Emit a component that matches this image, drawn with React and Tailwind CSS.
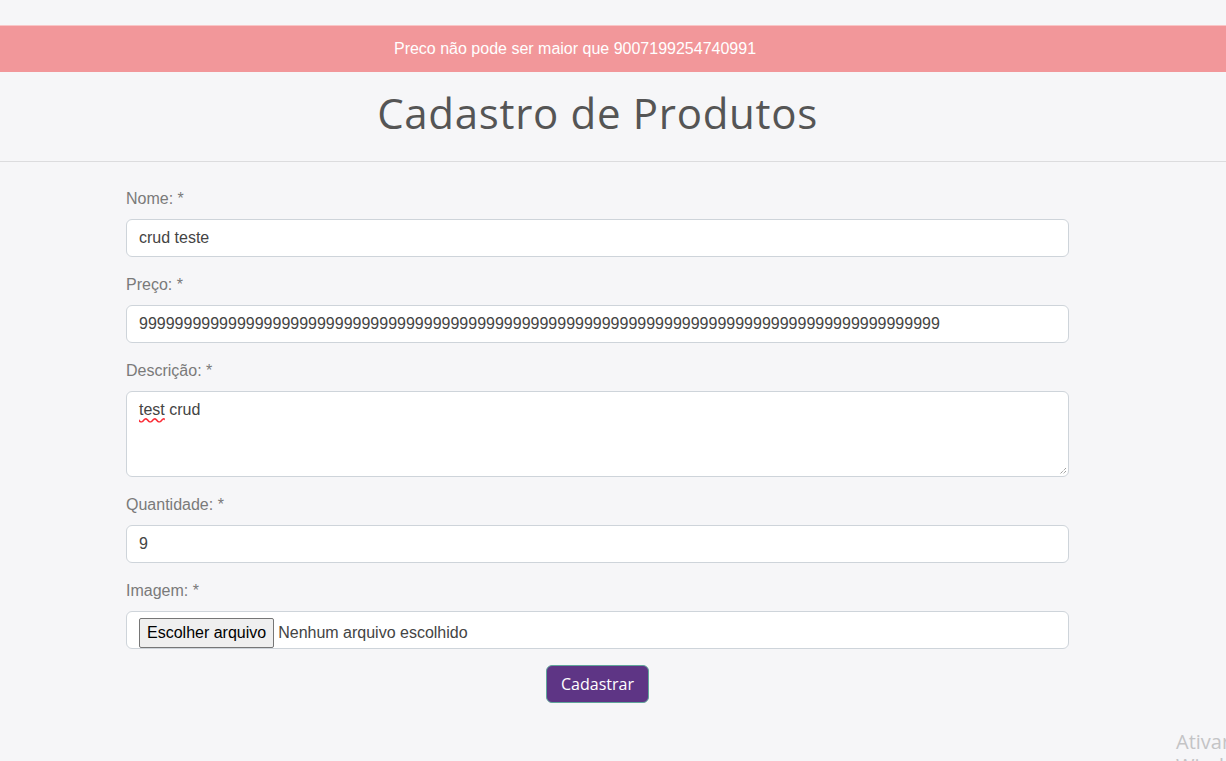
import { useState } from 'react';

const nines = '9'.repeat(90);

function Field({ label, children }) {
  return (
    <div className="mb-4">
      <label className="block mb-2 leading-6 text-[16px] text-[#7a7a7a]">{label}</label>
      {children}
    </div>
  );
}

function TextBox({ value }) {
  return (
    <div className="h-[38px] flex items-center px-3 bg-white border border-[#ced4da] rounded-md text-[16px] text-[#444]">
      {value}
    </div>
  );
}

export default function App() {
  const [msg] = useState('Preco não pode ser maior que 9007199254740991');

  return (
    <div className="relative min-h-[761px] overflow-hidden bg-[#f6f6f8] font-['Liberation_Sans',Arial,sans-serif]">
      <div className="h-[25px]" />
      <div className="h-[47px] flex items-center bg-[#f2979a] border-t border-[#f9c6c7]">
        <span className="w-[1150px] text-center text-white text-[16px]">{msg}</span>
      </div>

      <header className="h-[90px] flex items-center border-b border-[#dcdcde]">
        <h1 className="w-[1195px] -mt-[8px] text-center text-[42px] text-[#555] font-['Open_Sans',sans-serif] tracking-[0.7px]">
          Cadastro de Produtos
        </h1>
      </header>

      <form className="w-[943px] ml-[126px] pt-[25px]" onSubmit={e => e.preventDefault()}>
        <Field label="Nome: *">
          <TextBox value="crud teste" />
        </Field>
        <Field label="Preço: *">
          <TextBox value={nines} />
        </Field>
        <Field label="Descrição: *">
          <div className="relative h-[86px] px-3 pt-[6px] bg-white border border-[#ced4da] rounded-md text-[16px] text-[#444] leading-6">
            <span className="underline decoration-wavy decoration-red-500 underline-offset-2">test</span> crud
            <svg className="absolute right-[1px] bottom-[1px]" width="8" height="8" viewBox="0 0 8 8">
              <path d="M7 1 L1 7 M7 4 L4 7" stroke="#777" strokeWidth="1" strokeDasharray="1 1" />
            </svg>
          </div>
        </Field>
        <Field label="Quantidade: *">
          <TextBox value="9" />
        </Field>
        <Field label="Imagem: *">
          <div className="h-[38px] flex items-start pt-[6px] pl-3 bg-white border border-[#ced4da] rounded-md text-[16px]">
            <span className="h-[30px] px-[7px] flex items-center bg-[#efefef] border border-[#767676] rounded-[2px] text-black">
              Escolher arquivo
            </span>
            <span className="ml-1 h-[30px] flex items-center text-[#444]">Nenhum arquivo escolhido</span>
          </div>
        </Field>
        <div className="flex justify-center">
          <button className="h-[38px] px-[14px] bg-[#5e3585] text-white text-[16px] rounded-md border border-[#5fa59a] font-['Open_Sans',sans-serif]">
            Cadastrar
          </button>
        </div>
      </form>

      <div className="absolute left-[1176px] top-[730px] text-[20px] leading-6 text-[#c4c4c6] font-['Open_Sans',sans-serif]">
        Ativar o Windows
      </div>
    </div>
  );
}
